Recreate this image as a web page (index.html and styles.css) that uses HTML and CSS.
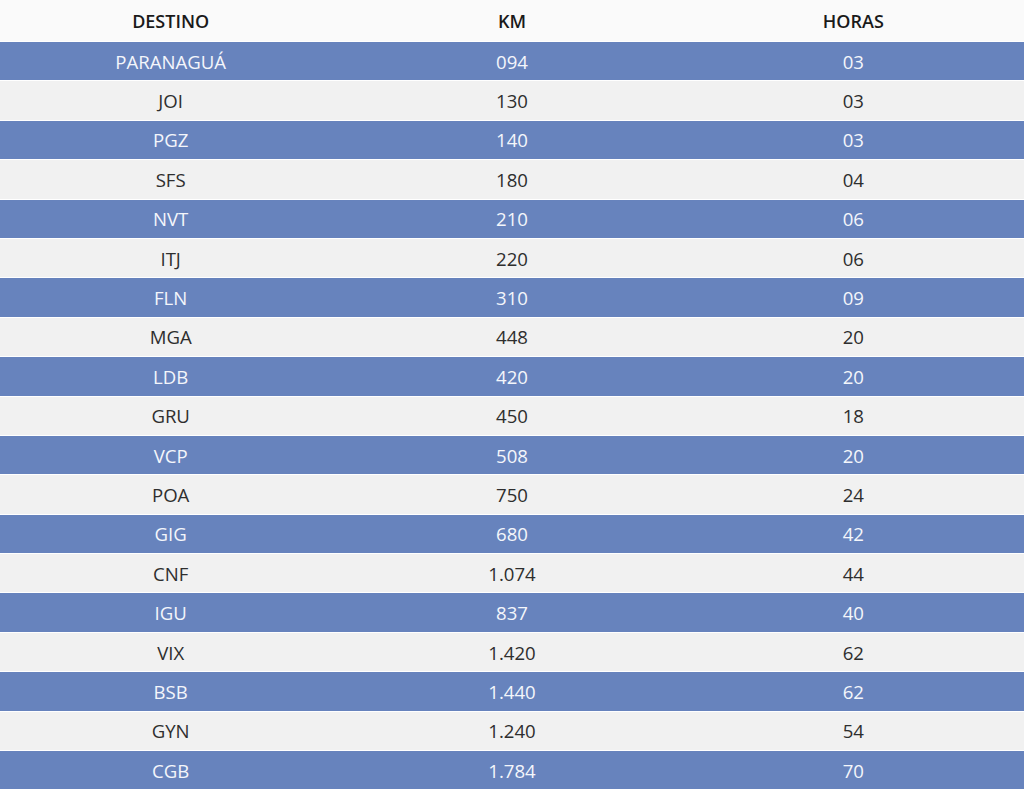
FILE: index.html
```html
<!DOCTYPE html>
<html lang="pt">
<head>
<meta charset="utf-8">
<link rel="stylesheet" href="styles.css">
</head>
<body>
<table class="tabela">
  <thead>
    <tr><th>DESTINO</th><th>KM</th><th>HORAS</th></tr>
  </thead>
  <tbody>
    <tr><td>PARANAGUÁ</td><td>094</td><td>03</td></tr>
    <tr><td>JOI</td><td>130</td><td>03</td></tr>
    <tr><td>PGZ</td><td>140</td><td>03</td></tr>
    <tr><td>SFS</td><td>180</td><td>04</td></tr>
    <tr><td>NVT</td><td>210</td><td>06</td></tr>
    <tr><td>ITJ</td><td>220</td><td>06</td></tr>
    <tr><td>FLN</td><td>310</td><td>09</td></tr>
    <tr><td>MGA</td><td>448</td><td>20</td></tr>
    <tr><td>LDB</td><td>420</td><td>20</td></tr>
    <tr><td>GRU</td><td>450</td><td>18</td></tr>
    <tr><td>VCP</td><td>508</td><td>20</td></tr>
    <tr><td>POA</td><td>750</td><td>24</td></tr>
    <tr><td>GIG</td><td>680</td><td>42</td></tr>
    <tr><td>CNF</td><td>1.074</td><td>44</td></tr>
    <tr><td>IGU</td><td>837</td><td>40</td></tr>
    <tr><td>VIX</td><td>1.420</td><td>62</td></tr>
    <tr><td>BSB</td><td>1.440</td><td>62</td></tr>
    <tr><td>GYN</td><td>1.240</td><td>54</td></tr>
    <tr><td>CGB</td><td>1.784</td><td>70</td></tr>
  </tbody>
</table>
</body>
</html>
```

FILE: styles.css
```css
html, body {
  margin: 0;
  padding: 0;
  background: #ffffff;
}
body {
  font-family: "Open Sans", "Liberation Sans", sans-serif;
}
.tabela {
  width: 1024px;
  border-collapse: collapse;
  table-layout: fixed;
}
.tabela th {
  height: 41px;
  padding: 0;
  font-size: 18px;
  font-weight: 600;
  color: #1a1a1a;
  background: #fafafa;
  text-align: center;
  vertical-align: middle;
}
.tabela td {
  height: 38.4px;
  padding: 0;
  font-size: 18.6px;
  text-align: center;
  vertical-align: middle;
  border-top: 1px solid #ffffff;
}
.tabela tbody tr:nth-child(odd) td {
  background: #6783bd;
  color: #f4f6fb;
}
.tabela tbody tr:nth-child(even) td {
  background: #f1f1f1;
  color: #2e2e2e;
}
```
